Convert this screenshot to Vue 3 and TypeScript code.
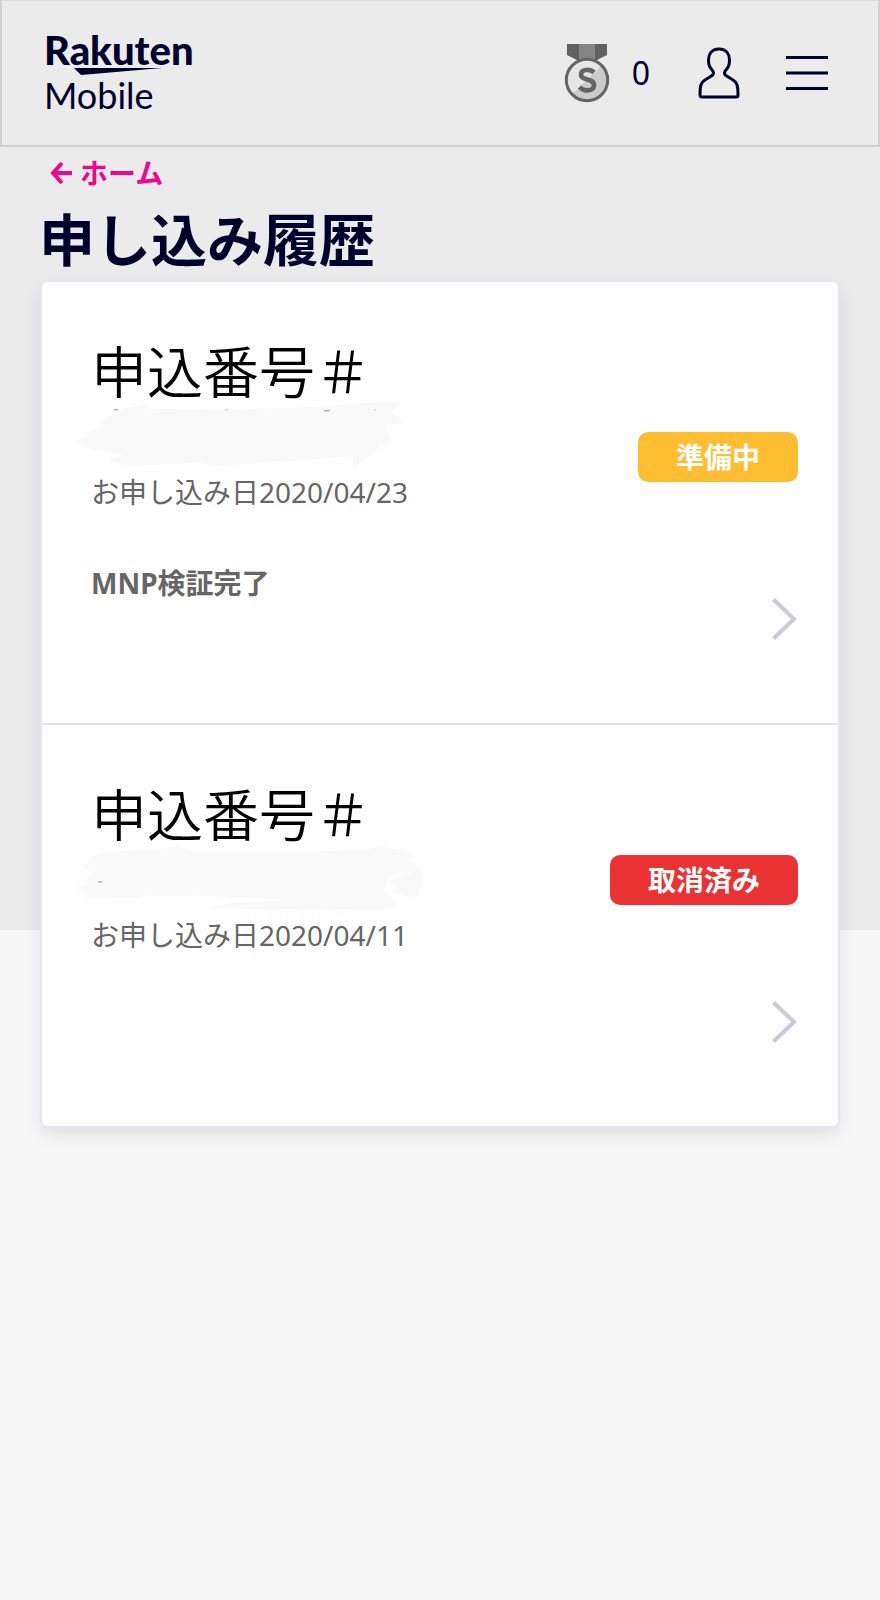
<script setup lang="ts">
interface Application {
  id: number
  date: string
  progress: string
  badge: string
  tone: 'pending' | 'cancelled'
  mask: string
  marks: string
}

const applications: Application[] = [
  {
    id: 1,
    date: '2020/04/23',
    progress: 'MNP検証完了',
    badge: '準備中',
    tone: 'pending',
    mask: 'M0 41L14 35L10 31L30 26L24 19L42 12L34 10L74 2L78 7L150 8L250 5L310 0L336 0L326 11L334 16L338 22L320 24L325 42L314 43L310 50L294 62L286 68L286 56L230 60L170 64L140 67L132 62L60 66L36 62L38 58L52 54L18 49Z',
    marks: 'M40 8H44M155 8H157M256 9H262M308 8H309',
  },
  {
    id: 2,
    date: '2020/04/11',
    progress: '',
    badge: '取消済み',
    tone: 'cancelled',
    mask: 'M0 44L14 40L10 34L20 30L6 22L16 17L14 14L26 8L84 4L106 1L122 7L240 7L300 5L312 1L330 4L350 9L342 16L356 24L357 42L352 54L338 52L326 48L330 42L322 38L330 34L350 27L330 29L322 34L318 48L330 56L330 64L314 67L240 66L136 65L160 60L220 56L120 52L78 52L60 55L30 54L8 54L14 50Z',
    marks: 'M24 38H28',
  },
]
</script>

<template>
  <div class="page">
    <header class="bar">
      <a class="logo" href="#" aria-label="Rakuten Mobile">
        <span class="brand">Rakuten</span>
        <svg class="swoosh" viewBox="0 0 88 8" aria-hidden="true">
          <path d="M0 0H88L7 7Z" />
        </svg>
        <span class="product">Mobile</span>
      </a>
      <nav class="tools">
        <a class="rank" href="#" aria-label="シルバー会員 0">
          <svg class="medal" viewBox="0 0 46 60" aria-hidden="true">
            <path d="M3 1H15V18L3 12Z" fill="#616161" />
            <path d="M31 1H43V12L31 18Z" fill="#616161" />
            <path d="M15 1H31V17H15Z" fill="#858585" />
            <circle cx="23" cy="37" r="20.5" fill="#cbcbcb" />
            <path d="M8.500 51.500A20.500 20.500 0 0 1 37.500 22.500Z" fill="#e6e6e6" />
            <circle cx="23" cy="37" r="20.700" fill="none" stroke="#646464" stroke-width="3" />
            <path
              d="M30 29.500C26 25.500 17 26 17 31.500C17 38 30 35 30 42C30 48.500 20 49 15.500 44"
              fill="none"
              stroke="#646464"
              stroke-width="4.600"
            />
          </svg>
          <span class="points">0</span>
        </a>
        <button class="tool" type="button" aria-label="アカウント">
          <svg class="person" viewBox="0 0 42 52" aria-hidden="true">
            <path
              d="M21 2C13.500 2 10.500 7.500 10.500 13C10.500 19 12 20.500 14.500 23.500C17 27 14.500 28.500 11 30.500C5 34 2.500 35.500 2.200 42L2 48Q2 50 4 50H38Q40 50 40 48L39.800 42C39.500 35.500 37 34 31 30.500C27.500 28.500 25 27 27.500 23.500C30 20.500 31.500 19 31.500 13C31.500 7.500 28.500 2 21 2Z"
            />
          </svg>
        </button>
        <button class="tool" type="button" aria-label="メニュー">
          <svg class="menu" viewBox="0 0 42 36" aria-hidden="true">
            <path d="M0 2.500H42M0 18H42M0 33.500H42" />
          </svg>
        </button>
      </nav>
    </header>

    <main class="content">
      <a class="back" href="#">
        <svg class="arrow" viewBox="0 0 22 24" aria-hidden="true">
          <path d="M12 2L3 12L12 22M3 12H22" />
        </svg>
        <span>ホーム</span>
      </a>
      <h1 class="title">申し込み履歴</h1>

      <section class="card">
        <article v-for="item in applications" :key="item.id" class="entry">
          <div class="details">
            <h2 class="number">申込番号＃</h2>
            <svg class="mask" viewBox="0 0 360 72" aria-hidden="true">
              <path :d="item.mask" />
              <path class="marks" :d="item.marks" />
            </svg>
            <p class="date">お申し込み日{{ item.date }}</p>
            <p class="progress">{{ item.progress }}</p>
          </div>
          <div class="side">
            <span class="badge" :class="item.tone">{{ item.badge }}</span>
            <a class="more" href="#" aria-label="詳細">
              <svg class="chevron" viewBox="0 0 26 42" aria-hidden="true">
                <path d="M1.500 1.500L22 21L1.500 40.500" />
              </svg>
            </a>
          </div>
        </article>
      </section>
    </main>
  </div>
</template>

<style>
body {
  margin: 0;
}
</style>

<style scoped>
.page {
  min-height: 100vh;
  background: linear-gradient(#ebebeb 930px, #f7f7f7 0);
  color: #00002d;
  font-family: 'Noto Sans', 'Noto Sans CJK JP', sans-serif;
}

.bar {
  box-sizing: border-box;
  height: 147px;
  padding: 0 50px 0 42px;
  border: 2px solid #cfcfcf;
  border-top: 1px solid #dcdcdc;
  display: flex;
  justify-content: space-between;
  align-items: center;
}

.logo {
  display: flex;
  flex-direction: column;
  color: inherit;
  text-decoration: none;
  font-family: Lato, sans-serif;
  font-size: 40px;
  line-height: 36px;
}

.brand {
  font-weight: 900;
}

.product {
  font-size: 36px;
  line-height: 38px;
  font-weight: 400;
}

.swoosh {
  width: 88px;
  height: 8px;
  margin-left: 30px;
  fill: #00002d;
}

.tools {
  display: flex;
  align-items: center;
  gap: 48px;
}

.tool + .tool {
  margin-left: -2px;
}

.rank {
  display: flex;
  align-items: center;
  gap: 22px;
  color: inherit;
  text-decoration: none;
}

.medal {
  width: 46px;
  height: 60px;
}

.points {
  font-size: 32px;
  line-height: 40px;
}

.tool {
  display: flex;
  padding: 0;
  border: 0;
  background: none;
}

.person,
.menu {
  width: 42px;
  fill: none;
  stroke: #00002d;
  stroke-width: 3px;
}

.person {
  height: 52px;
}

.menu {
  height: 36px;
}

.content {
  padding: 0 42px 80px;
}

.back {
  display: inline-flex;
  align-items: center;
  gap: 8px;
  padding: 6px 8px;
  color: #f0058c;
  font-size: 28px;
  line-height: 40px;
  font-weight: 700;
  text-decoration: none;
}

.arrow {
  width: 22px;
  height: 24px;
  fill: none;
  stroke: currentColor;
  stroke-width: 4px;
}

.title {
  margin: 4px -3px 7px;
  font-size: 56px;
  line-height: 72px;
  font-weight: 700;
}

.card {
  border-radius: 6px;
  background: #fff;
  box-shadow:
    0 0 0 2px #e6e6ec,
    0 5px 4px #e4e4ea,
    0 8px 22px rgba(0, 0, 0, 0.1);
}

.entry {
  display: flex;
  justify-content: space-between;
  padding: 0 40px 0 49px;
}

.entry + .entry {
  border-top: 2px solid #e4e4e6;
}

.details {
  padding: 61px 0 120px;
}

.number {
  margin: 0;
  color: #000;
  font-size: 56px;
  line-height: 56px;
  font-weight: 350;
}

.mask {
  display: block;
  width: 360px;
  height: 70px;
  margin: 3px 0 0 -21px;
  fill: #f9f9f9;
}

.marks {
  fill: none;
  stroke: #8a8a8a;
}

.date,
.progress {
  margin: 0;
  color: #666;
  font-size: 28px;
  line-height: 40px;
}

.progress {
  margin-top: 51px;
  font-weight: 700;
}

.side {
  display: flex;
  flex-direction: column;
  justify-content: space-between;
  align-items: flex-end;
  padding: 34px 0 83px;
}

.side::before {
  content: '';
}

.badge {
  padding: 0 38px;
  border-radius: 10px;
  color: #fff;
  font-size: 28px;
  line-height: 50px;
  font-weight: 700;
}

.pending {
  background: #ffbe32;
}

.cancelled {
  background: #eb3232;
}

.more {
  display: flex;
}

.chevron {
  width: 26px;
  height: 42px;
  fill: none;
  stroke: #cacad8;
  stroke-width: 4px;
}
</style>
